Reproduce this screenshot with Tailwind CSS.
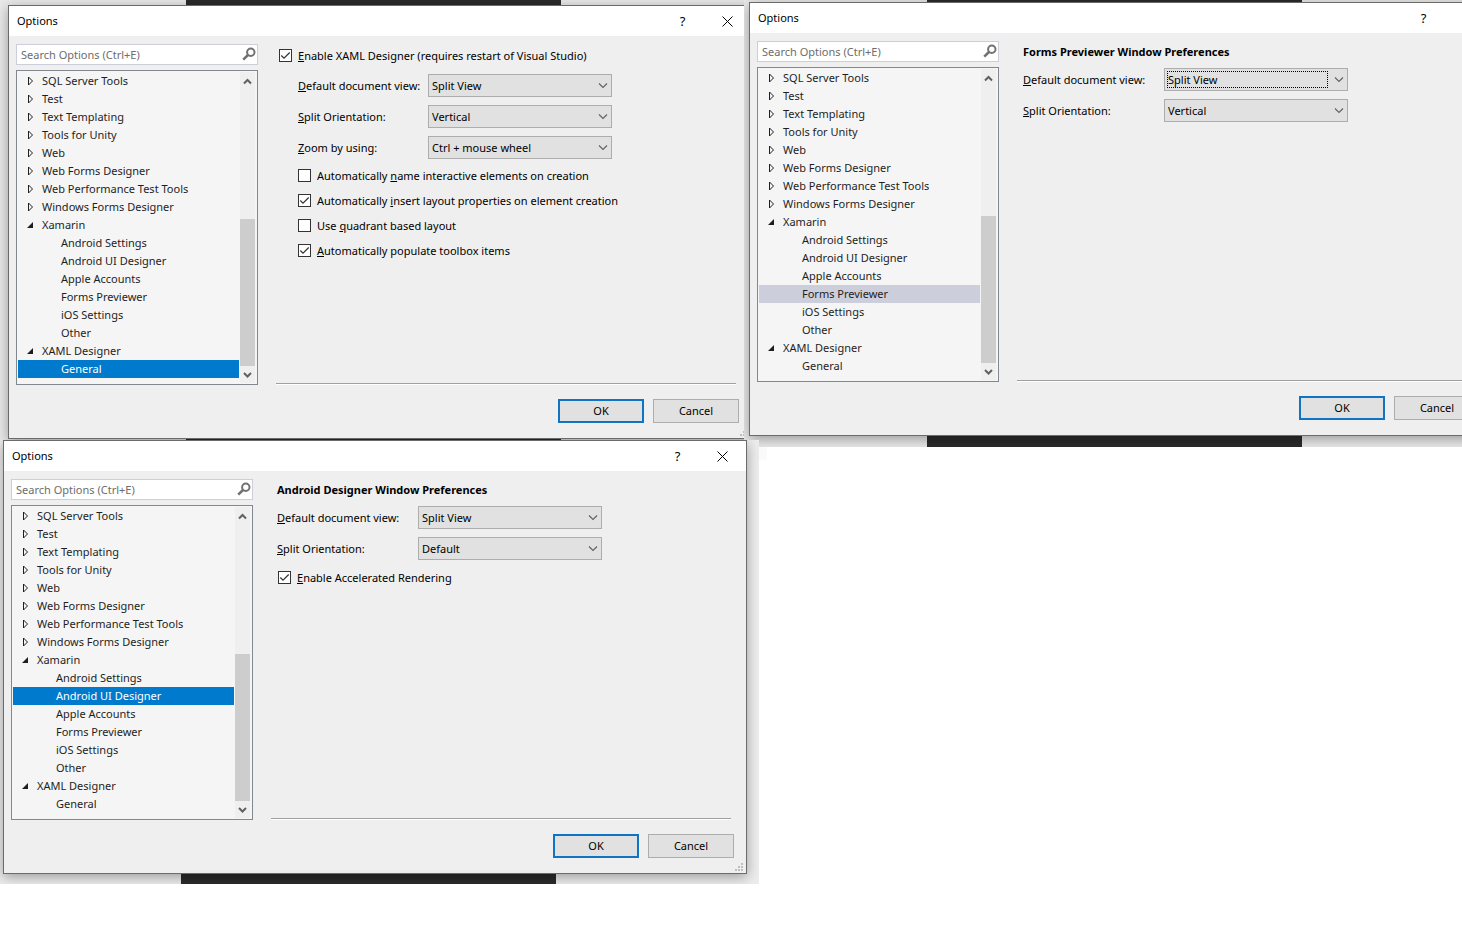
<!DOCTYPE html>
<html lang="en">
<head>
<meta charset="utf-8">
<title>Options</title>
<script src="https://cdn.jsdelivr.net/npm/@tailwindcss/browser@4"></script>
</head>
<body class="relative min-h-screen overflow-x-hidden bg-white font-['Noto_Sans','Open_Sans',sans-serif] text-[11px] leading-[18px] text-black">

<template id="tree">
  <div class="flex flex-col gap-[5px] w-[242px] shrink-0">
    <div class="relative">
      <input type="search" aria-label="Search Options" placeholder="Search Options (Ctrl+E)" class="block h-[21px] w-full appearance-none border border-[#cccedb] bg-white pl-1 pr-6 outline-none placeholder:text-[#6d6d6d]">
      <svg class="absolute right-[2px] top-[3px]" width="14" height="14" viewBox="0 0 14 14" fill="none" stroke="#717171"><circle cx="8.8" cy="5.2" r="3.7" stroke-width="2"/><path d="M6 8L1.2 12.6" stroke-width="2.6"/></svg>
    </div>
    <div class="flex border border-[#828790] bg-[#f5f5f5] p-px">
      <ul role="tree" class="mb-[5px] flex-1 text-[#1e1e1e]"></ul>
      <div class="ml-px mr-px flex w-[15px] flex-col bg-[#efefef]">
        <svg class="mt-1" width="15" height="10" viewBox="0 0 15 10" fill="none" stroke="#606060" stroke-width="2"><path d="M4 7.5L7.5 4L11 7.5"/></svg>
        <div class="grow"></div>
        <div class="h-[147px] bg-[#cdcdcd]"></div>
        <svg class="mb-1 mt-[3px]" width="15" height="10" viewBox="0 0 15 10" fill="none" stroke="#606060" stroke-width="2"><path d="M4 4L7.5 7.5L11 4"/></svg>
      </div>
    </div>
  </div>
</template>

<template id="titlebar">
  <header class="flex h-[30px] items-center bg-white pl-2 pr-px">
    <h1 class="flex-1">Options</h1>
    <button type="button" aria-label="Help" class="h-full w-[45px] text-[13px]">?</button>
    <button type="button" aria-label="Close" class="flex h-full w-[45px] items-center justify-center"><svg width="11" height="11" viewBox="0 0 11 11" stroke="#000" stroke-width="1"><path d="M.5 .5L10.5 10.5M10.5 .5L.5 10.5"/></svg></button>
  </header>
</template>

<template id="footer">
  <footer class="flex justify-end gap-[9px] pb-[15px] pr-3 pt-[14px]">
    <button type="button" class="h-6 w-[86px] border-2 border-[#0f74c4] bg-[#e1e1e1]">OK</button>
    <button type="button" class="h-6 w-[86px] border border-[#adadad] bg-[#e1e1e1]">Cancel</button>
    <svg class="absolute bottom-[2px] right-[3px]" width="8" height="8" viewBox="0 0 8 8" fill="#bfbfbf"><path d="M6 0h2v2H6zM3 3h2v2H3zM6 3h2v2H6zM0 6h2v2H0zM3 6h2v2H3zM6 6h2v2H6z"/></svg>
  </footer>
</template>

<!-- XAML Designer options -->
<section class="absolute left-0 top-0 h-[440px] w-[744px] overflow-hidden bg-[#e9e9e9]">
  <div class="absolute left-[186px] top-0 h-full w-[375px] bg-[#2b2b2b]"></div>
  <div role="dialog" aria-label="Options" data-selected="General" data-tone="active" class="absolute left-2 top-[5px] w-[744px] border border-[#6b6b6b] bg-[#efefef] shadow-[0_3px_12px_rgba(0,0,0,0.35)]">
    <div class="flex gap-[18px] pl-[7px] pr-[15px] pt-2" data-body>
      <main class="flex flex-1 flex-col pt-[2px]">
        <div class="pl-[3px]"><label class="flex h-[19px] items-center gap-[6px]" data-check="on"><span><u>E</u>nable XAML Designer (requires restart of Visual Studio)</span></label></div>
        <div class="mt-[9px] flex flex-col gap-2 pl-[22px]">
          <div class="flex h-[23px] items-center"><label for="a1" class="w-[130px]"><u>D</u>efault document view:</label><span data-select="a1">Split View</span></div>
          <div class="flex h-[23px] items-center"><label for="a2" class="w-[130px]"><u>S</u>plit Orientation:</label><span data-select="a2">Vertical</span></div>
          <div class="flex h-[23px] items-center"><label for="a3" class="w-[130px]"><u>Z</u>oom by using:</label><span data-select="a3">Ctrl + mouse wheel</span></div>
        </div>
        <div class="mt-[7px] flex flex-col gap-[6px] pl-[22px]">
          <label class="flex h-[19px] items-center gap-[6px]" data-check="off"><span>Automatically <u>n</u>ame interactive elements on creation</span></label>
          <label class="flex h-[19px] items-center gap-[6px]" data-check="on"><span>Automatically <u>i</u>nsert layout properties on element creation</span></label>
          <label class="flex h-[19px] items-center gap-[6px]" data-check="off"><span>Use <u>q</u>uadrant based layout</span></label>
          <label class="flex h-[19px] items-center gap-[6px]" data-check="on"><span><u>A</u>utomatically populate toolbox items</span></label>
        </div>
        <div class="mt-auto h-[2px] border-t border-[#a0a0a0] bg-white"></div>
      </main>
    </div>
  </div>
</section>

<!-- Forms Previewer options -->
<section class="absolute left-[744px] right-0 top-0 h-[447px] overflow-hidden bg-[#e9e9e9]">
  <div class="absolute left-[183px] top-0 h-full w-[375px] bg-[#2b2b2b]"></div>
  <div role="dialog" aria-label="Options" data-selected="Forms Previewer" data-tone="inactive" class="absolute left-[5px] top-[2px] w-[744px] border border-[#6b6b6b] bg-[#efefef] shadow-[0_3px_12px_rgba(0,0,0,0.35)]">
    <div class="flex gap-[18px] pl-[7px] pr-[15px] pt-2" data-body>
      <main class="flex flex-1 flex-col pt-px">
        <h2 class="h-[19px] pl-[6px] font-bold leading-[19px]">Forms Previewer Window Preferences</h2>
        <div class="mt-[7px] flex flex-col gap-2 pl-[6px]">
          <div class="flex h-[23px] items-center"><label for="b1" class="w-[141px]"><u>D</u>efault document view:</label><span data-select="b1" data-focus>Split View</span></div>
          <div class="flex h-[23px] items-center"><label for="b2" class="w-[141px]"><u>S</u>plit Orientation:</label><span data-select="b2">Vertical</span></div>
        </div>
        <div class="mt-auto h-[2px] border-t border-[#a0a0a0] bg-white"></div>
      </main>
    </div>
  </div>
</section>

<!-- Android UI Designer options -->
<section class="absolute left-0 top-[440px] h-[444px] w-[759px] overflow-hidden bg-[#ededed]">
  <div class="absolute left-[181px] top-0 h-full w-[375px] bg-[#2b2b2b]"></div>
  <div role="dialog" aria-label="Options" data-selected="Android UI Designer" data-tone="active" class="absolute left-[3px] top-0 w-[744px] border border-[#6b6b6b] bg-[#efefef] shadow-[0_3px_12px_rgba(0,0,0,0.35)]">
    <div class="flex gap-[18px] pl-[7px] pr-[15px] pt-2" data-body>
      <main class="flex flex-1 flex-col pt-px">
        <h2 class="h-[19px] pl-[6px] font-bold leading-[19px]">Android Designer Window Preferences</h2>
        <div class="mt-[7px] flex flex-col gap-2 pl-[6px]">
          <div class="flex h-[23px] items-center"><label for="c1" class="w-[141px]"><u>D</u>efault document view:</label><span data-select="c1">Split View</span></div>
          <div class="flex h-[23px] items-center"><label for="c2" class="w-[141px]"><u>S</u>plit Orientation:</label><span data-select="c2">Default</span></div>
        </div>
        <div class="mt-2 pl-[7px]"><label class="flex h-[19px] items-center gap-[6px]" data-check="on"><span><u>E</u>nable Accelerated Rendering</span></label></div>
        <div class="mt-auto h-[2px] border-t border-[#a0a0a0] bg-white"></div>
      </main>
    </div>
  </div>
</section>
<div class="absolute left-[759px] top-[447px] h-[13px] w-2 bg-[#fafafa]"></div>

<script>
const parents = ['SQL Server Tools', 'Test', 'Text Templating', 'Tools for Unity', 'Web', 'Web Forms Designer', 'Web Performance Test Tools', 'Windows Forms Designer'];
const items = [
  ...parents.map(t => [t, 'closed']),
  ['Xamarin', 'open'], ['Android Settings'], ['Android UI Designer'], ['Apple Accounts'], ['Forms Previewer'], ['iOS Settings'], ['Other'],
  ['XAML Designer', 'open'], ['General']
];
const closedIcon = '<svg width="6" height="10" viewBox="0 0 6 10" fill="none" stroke="#1e1e1e"><path d="M1.5 1V9L5.5 5Z"/></svg>';
const openIcon = '<svg width="6" height="6" viewBox="0 0 6 6" fill="#1e1e1e"><path d="M6 0V6H0Z"/></svg>';
const tones = { active: 'bg-[#007acc] text-white', inactive: 'bg-[#cccedb]' };
const clone = id => document.getElementById(id).content.cloneNode(true);

document.querySelectorAll('[role=dialog]').forEach(d => {
  const tree = clone('tree');
  tree.querySelector('ul').innerHTML = items.map(([t, state]) => {
    const tone = t === d.dataset.selected ? tones[d.dataset.tone] : '';
    return state
      ? `<li role="treeitem" class="flex h-[18px] items-center gap-[9px] pl-[9px]">${state === 'open' ? openIcon : closedIcon}<span>${t}</span></li>`
      : `<li role="treeitem" class="h-[18px] pl-[43px] ${tone}">${t}</li>`;
  }).join('');
  d.querySelector('[data-body]').prepend(tree);
  d.prepend(clone('titlebar'));
  d.append(clone('footer'));
});

document.querySelectorAll('[data-select]').forEach(s => {
  const focus = 'focus' in s.dataset ? '<span class="pointer-events-none absolute bottom-[3px] left-[3px] right-[20px] top-[3px] border border-dotted border-black"></span>' : '';
  s.className = 'relative block h-[23px] w-[184px]';
  s.innerHTML = `<select id="${s.dataset.select}" class="block h-full w-full appearance-none border border-[#adadad] bg-[#e1e1e1] pl-[3px] pr-5 outline-none"><option>${s.textContent}</option></select>${focus}
    <svg class="pointer-events-none absolute right-1 top-2" width="10" height="8" viewBox="0 0 10 8" fill="none" stroke="#606060" stroke-width="1.1"><path d="M1 1.5L5 5.5L9 1.5"/></svg>`;
});

document.querySelectorAll('[data-check]').forEach(l => {
  l.insertAdjacentHTML('afterbegin', `<span class="relative block size-[13px]"><input type="checkbox" ${l.dataset.check === 'on' ? 'checked' : ''} class="peer block size-[13px] appearance-none border border-[#333] bg-white"><svg class="pointer-events-none absolute left-0 top-0 hidden peer-checked:block" width="13" height="13" viewBox="0 0 13 13" fill="none" stroke="#333" stroke-width="1.2"><path d="M2.3 6.5L5 9.2L10.7 3.5"/></svg></span>`);
});
</script>
</body>
</html>
